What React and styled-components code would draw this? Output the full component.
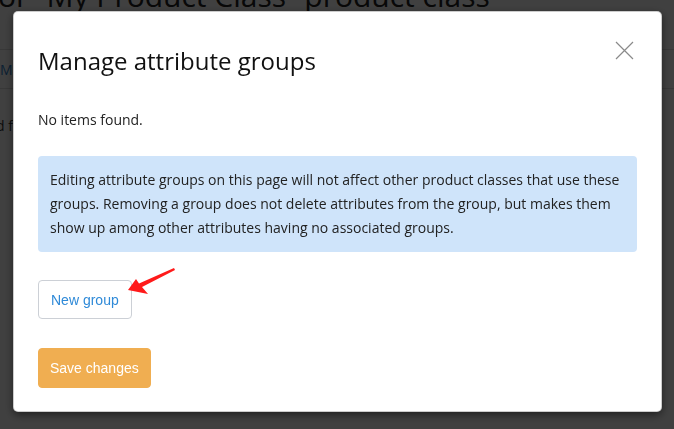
import React from 'react'
import styled, { createGlobalStyle } from 'styled-components'

const GlobalStyle = createGlobalStyle`
  html, body {
    margin: 0;
    padding: 0;
    background: #fff;
    overflow: hidden;
  }
  body {
    font-family: "Open Sans", "Liberation Sans", sans-serif;
    color: #333;
  }
`

// page behind the dialog
const Page = styled.div`
  width: 674px;
  height: 429px;
  overflow: hidden;
`

const PageTitle = styled.h1`
  margin: -22px 0 0 -2px;
  font-size: 30px;
  font-weight: 400;
  line-height: 36px;
  white-space: nowrap;
  color: #222;
`

const Tabs = styled.div`
  margin-top: 35px;
  height: 38px;
  border-top: 1px solid #ddd;
  border-bottom: 1px solid #ddd;
  display: flex;
  align-items: center;
`

const Tab = styled.a`
  font-size: 14px;
  color: #2f7fc8;
  text-decoration: none;
`

const PageText = styled.p`
  margin: 27px 0 0 -4px;
  font-size: 14px;
  line-height: 20px;
`

// dialog
const Overlay = styled.div`
  position: fixed;
  inset: 0;
  background: rgba(0, 0, 0, 0.75);
`

const Modal = styled.div`
  position: absolute;
  left: 13px;
  top: 11px;
  width: 649px;
  height: 401px;
  box-sizing: border-box;
  background: #fff;
  border: 1px solid rgba(0, 0, 0, 0.2);
  border-radius: 5px;
  box-shadow: 0 3px 9px rgba(0, 0, 0, 0.5);
  padding: 0 24px;
`

const Header = styled.div`
  position: relative;
  padding-top: 34px;
`

const Title = styled.h2`
  margin: 0;
  font-size: 24px;
  font-weight: 400;
  line-height: 29px;
  color: #111;
`

const Close = styled.button`
  position: absolute;
  top: 29px;
  right: 3px;
  width: 19px;
  height: 19px;
  padding: 0;
  border: 0;
  background: none;
  cursor: pointer;
  display: flex;
`

const Body = styled.div`
  display: flex;
  flex-direction: column;
  align-items: flex-start;
`

const Empty = styled.p`
  margin: 35px 0 0;
  font-size: 14px;
  line-height: 20px;
  color: #222;
`

const Info = styled.div`
  align-self: stretch;
  margin-top: 26px;
  padding: 12px 12px;
  background: #cfe4fa;
  border-radius: 4px;
  font-size: 14px;
  line-height: 24px;
  color: #222;
`

const Button = styled.button`
  height: ${p => (p.primary ? '40px' : '39px')};
  margin-top: ${p => (p.primary ? '29px' : '28px')};
  padding: 0 ${p => (p.primary ? '11px' : '12px')};
  box-sizing: border-box;
  font-family: "Liberation Sans", Arial, sans-serif;
  font-size: 14px;
  border-radius: 4px;
  cursor: pointer;
  color: ${p => (p.primary ? '#fff' : '#2f8ad8')};
  background: ${p => (p.primary ? '#f0ae51' : '#fff')};
  border: 1px solid ${p => (p.primary ? '#f0ae51' : '#ccd0d6')};
`

const Arrow = styled.svg`
  position: absolute;
  left: 126px;
  top: 267px;
`

const CloseIcon = () => (
  <svg width="19" height="19" viewBox="0 0 19 19">
    <path d="M1 1L18 18M18 1L1 18" stroke="#8a8a8a" strokeWidth="1.2" fill="none" />
  </svg>
)

export default function App() {
  return (
    <>
      <GlobalStyle />
      <Page>
        <PageTitle>or “My Product Class” product class</PageTitle>
        <Tabs>
          <Tab href="#">Manage</Tab>
        </Tabs>
        <PageText>d f</PageText>
      </Page>
      <Overlay>
        <Modal>
          <Header>
            <Title>Manage attribute groups</Title>
            <Close aria-label="Close">
              <CloseIcon />
            </Close>
          </Header>
          <Body>
            <Empty>No items found.</Empty>
            <Info>
              Editing attribute groups on this page will not affect other product classes that use these
              groups. Removing a group does not delete attributes from the group, but makes them
              show up among other attributes having no associated groups.
            </Info>
            <Button>New group</Button>
            <Button primary>Save changes</Button>
          </Body>
        </Modal>
        <Arrow width="52" height="30" viewBox="0 0 52 30">
          <polygon points="2,23 10,12 13,16.5 48,1 49,3 16,20 22,27" fill="#ff1a1a" />
        </Arrow>
      </Overlay>
    </>
  )
}
